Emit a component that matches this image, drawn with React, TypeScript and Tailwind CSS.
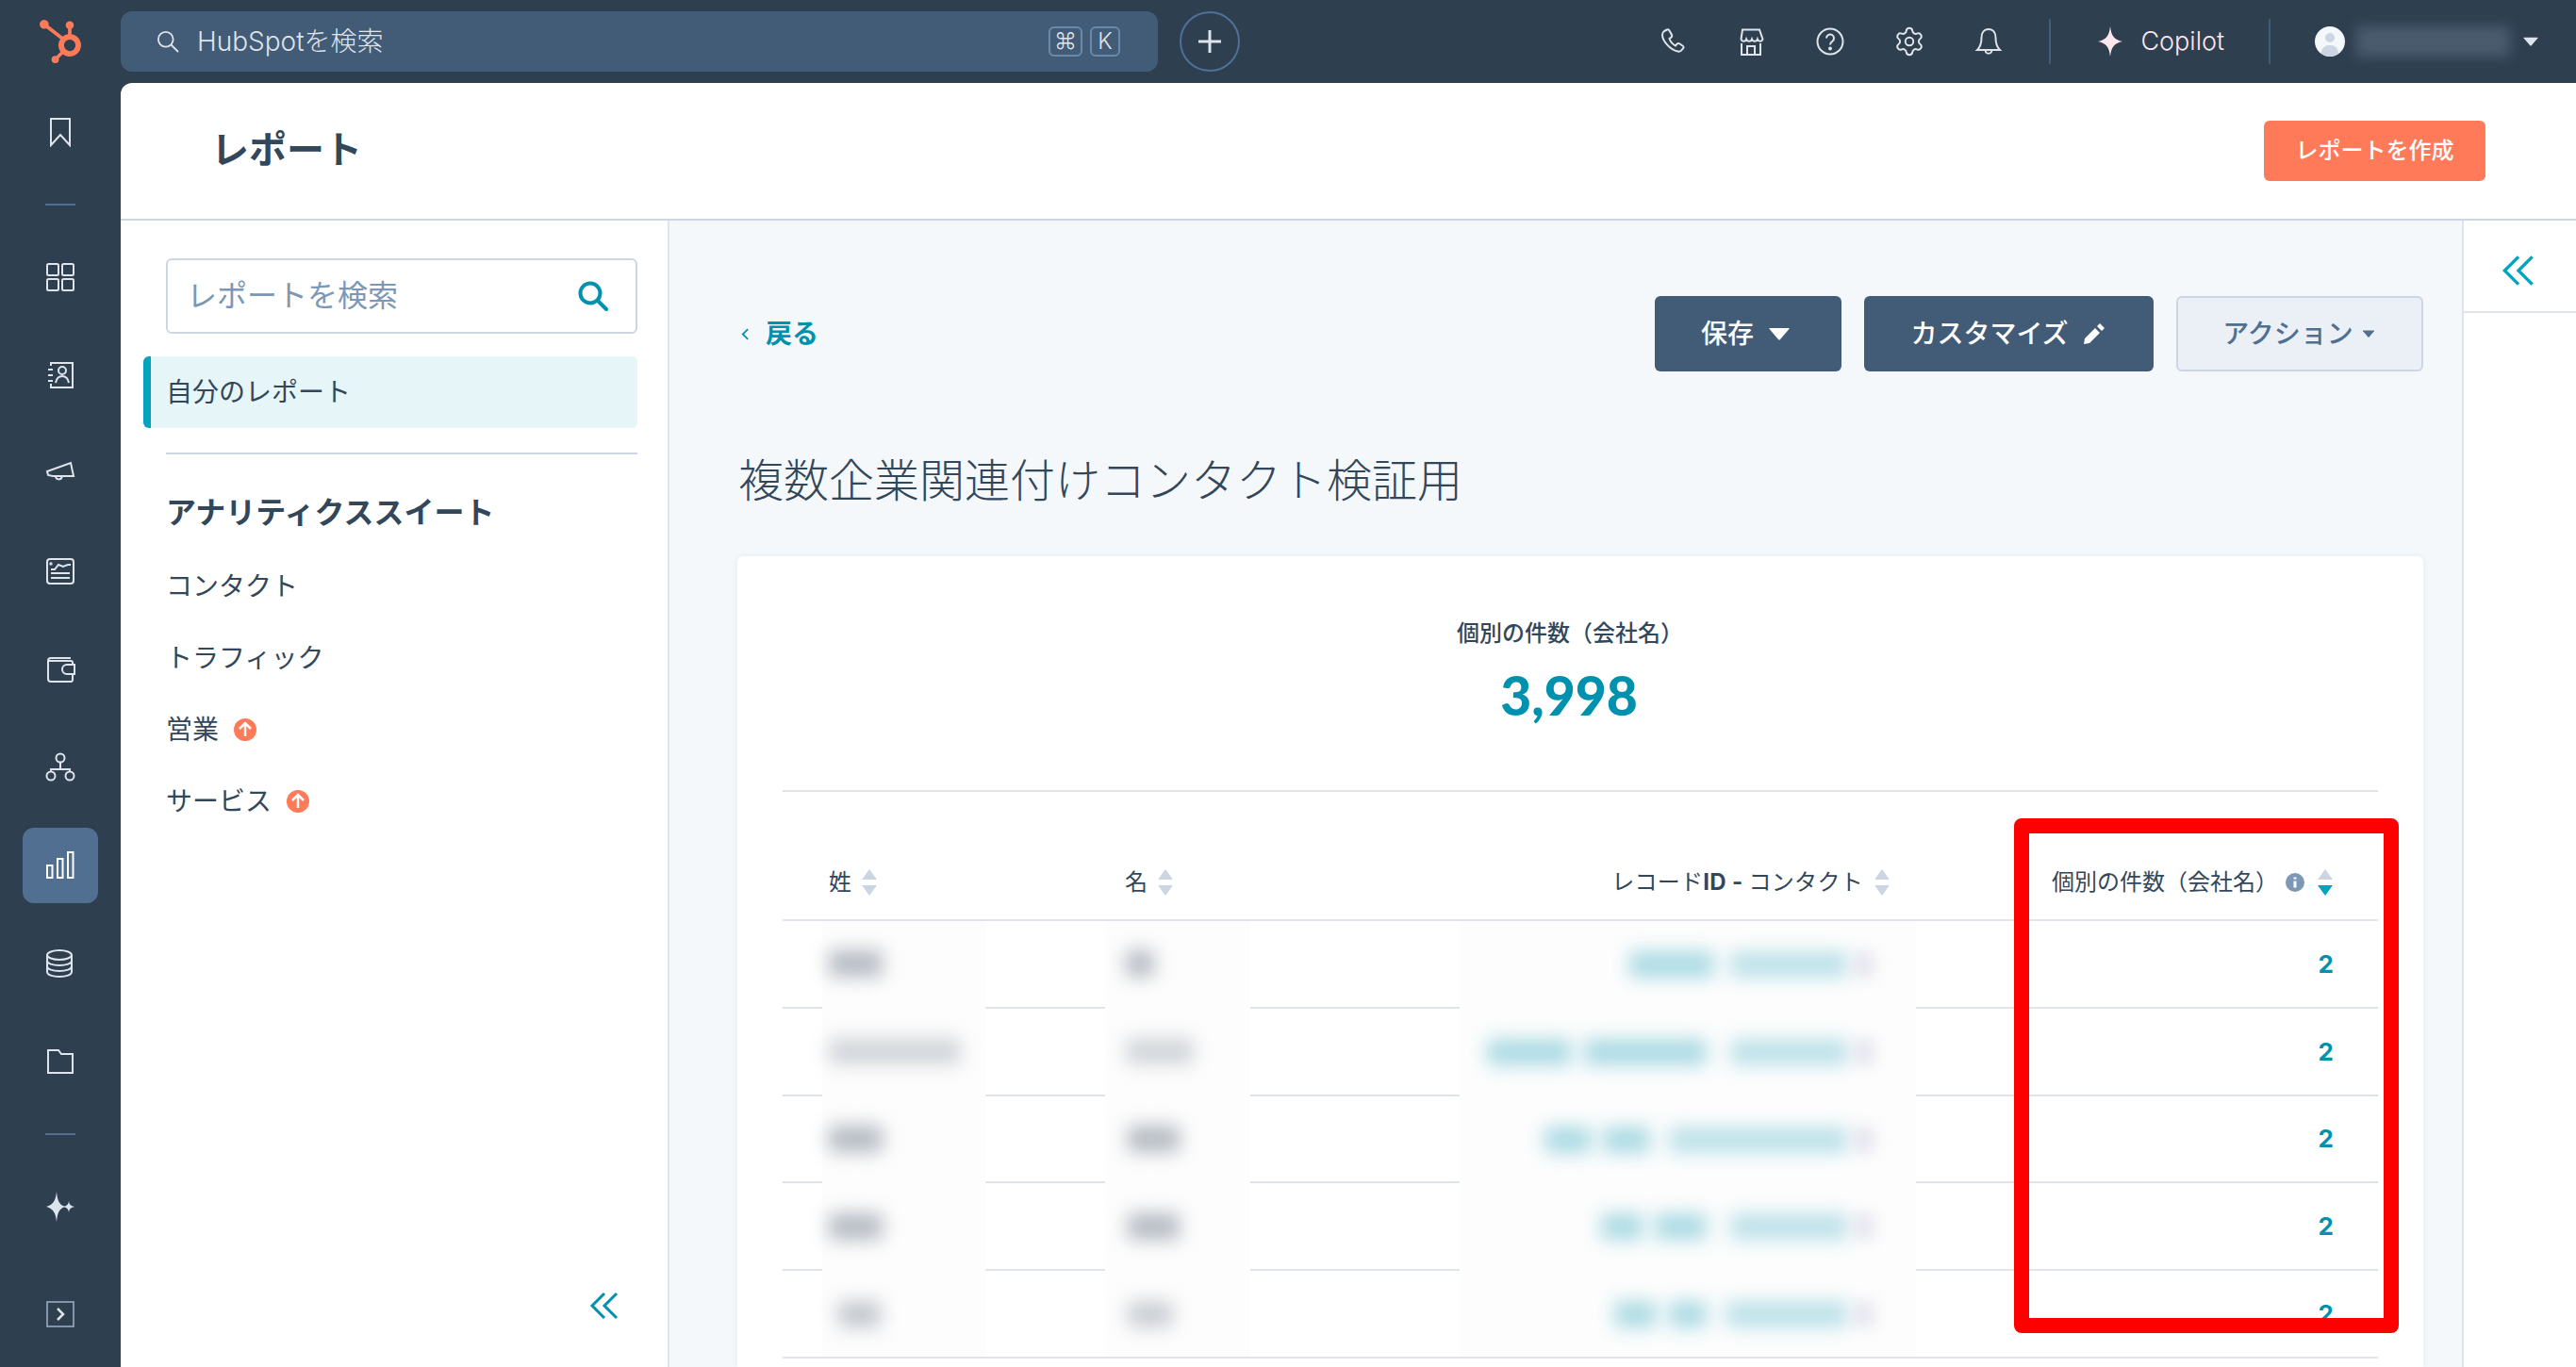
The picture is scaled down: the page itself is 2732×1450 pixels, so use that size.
import React from 'react';
import { SiHubspot } from 'react-icons/si';
import { Settings } from 'lucide-react';

type IP = { className?: string };
const S = ({ children, className = '', box = 32 }: { children: React.ReactNode; className?: string; box?: number }) => (
  <svg viewBox={`0 0 ${box} ${box}`} width={box} height={box} fill="none" stroke="currentColor" strokeWidth={2} className={className}>
    {children}
  </svg>
);

const Bookmark = () => <S><path d="M6 2h20v28l-10-11-10 11z" /></S>;
const Grid = () => <S><rect x="2" y="2" width="12" height="12" rx="1.5" /><rect x="18" y="2" width="12" height="12" rx="1.5" /><rect x="2" y="18" width="12" height="12" rx="1.5" /><rect x="18" y="18" width="12" height="12" rx="1.5" /></S>;
const Contacts = () => <S><path d="M6 6V3h23v26H6v-4" /><path d="M3 10h5M3 16h5M3 22h5" /><circle cx="18" cy="11" r="4" /><path d="M11 24c1-5 4-7 7-7s6 2 7 7" /></S>;
const Megaphone = () => <S><path d="M2 14l25-9 3 14H8l-5-1z" /><path d="M11 19c0 4 6 5 7 0" /></S>;
const Report = () => <S><rect x="2" y="3" width="28" height="26" rx="3" /><path d="M6 14h4l4-5 5 2 5-2h3" /><path d="M6 18h20M6 23h20" /><circle cx="6" cy="8" r="0.7" /></S>;
const Wallet = () => <S><path d="M27 4H6a3 3 0 0 0-3 3v19a3 3 0 0 0 3 3h21a2 2 0 0 0 2-2v-5" /><path d="M29 11v-2a2 2 0 0 0-2-2H3" /><path d="M31 11H23a5 5 0 0 0 0 10h8z" /></S>;
const Network = () => <S><circle cx="16" cy="6" r="4.5" /><circle cx="6" cy="25" r="4.5" /><circle cx="26" cy="25" r="4.5" /><path d="M16 11v7M6 20v-2h20v2" /></S>;
const Chart = () => <S><rect x="2" y="16" width="5.5" height="13" /><rect x="13" y="9" width="5.5" height="20" /><rect x="24" y="2" width="5.5" height="27" /></S>;
const Database = () => <S><ellipse cx="15" cy="7" rx="13" ry="5" /><path d="M2 7v18c0 3 6 5 13 5s13-2 13-5V7" /><path d="M2 13c0 3 6 5 13 5s13-2 13-5M2 19c0 3 6 5 13 5s13-2 13-5" /></S>;
const Folder = () => <S><path d="M3 4h11l3 4h12v20H3z" /></S>;
const Spark = () => (
  <svg viewBox="0 0 32 32" width="32" height="32" fill="currentColor">
    <path d="M12 0c1 10 3 14 9 16-6 2-8 6-9 16-1-10-4-14-11-16 7-2 10-6 11-16z" />
    <path d="M25 10c.5 3.500 1.800 5 6 6-4.200 1-5.500 2.500-6 6-.5-3.500-1.800-5-6-6 4.200-1 5.500-2.500 6-6z" />
  </svg>
);
const Expand = () => <S><rect x="2" y="3" width="28" height="26" strokeWidth={1.600} className="text-[#99acc2]" /><path d="M13 10l6 6-6 6" stroke="#dfe3eb" strokeWidth={2.500} /></S>;

const Phone = () => <S><path d="M8 5l3-1.500c1-.5 2 0 2.500 1L16 9c.4 1 .2 2-.6 2.600L13.500 13c1 3 3.500 6 6.500 7.500l1.600-1.800c.7-.8 1.700-.9 2.600-.4l3.500 2.400c1 .7 1.100 1.800.3 2.700l-2 2.200c-1 1-2 1.300-3.500 1C14 25 6 15 6 9c0-1.600.8-3.200 2-4z" /></S>;
const Store = () => <S><path d="M7 3.500h18l3.500 10c-1 3-4.500 3-5.600 0-1 3-4.800 3-5.900 0-1 3-4.800 3-5.900 0-1 3-4.600 3-5.600 0z" /><path d="M6 18v12h20V18M12 30v-9h8v9" /></S>;
const Help = () => <S><circle cx="16" cy="16" r="13.500" /><path d="M12 12.500a4 4 0 1 1 6.300 3.300c-1.500 1-2.300 1.700-2.300 3.700" /><circle cx="16" cy="23.500" r="1" fill="currentColor" /></S>;
const Gear = () => <Settings size={34} strokeWidth={1.400} />;
const Bell = () => <S><path d="M16 3c-5 0-7.500 4-7.500 9 0 6-1 9.500-4.500 13h24c-3.500-3.500-4.500-7-4.500-13 0-5-2.500-9-7.500-9z" /><path d="M12.500 25c.5 5 6.500 5 7 0" /></S>;
const Caret = ({ className = '' }: IP) => (
  <svg viewBox="0 0 22 14" className={className} fill="currentColor"><path d="M1 1h20q1 0 .4 1L12 13q-1 1-2 0L.6 2Q0 1 1 1z" /></svg>
);
const Chevrons = ({ className = '', size = 32 }: IP & { size?: number }) => (
  <svg viewBox="0 0 32 32" width={size} height={size} fill="none" stroke="currentColor" strokeWidth={3} className={className}>
    <path d="M16 3L3 16l13 13M29 3L16 16l13 13" />
  </svg>
);
const SearchIco = ({ w = 3, className = '' }: IP & { w?: number }) => (
  <svg viewBox="0 0 32 32" width="32" height="32" fill="none" stroke="currentColor" strokeWidth={w} strokeLinecap="round" className={className}>
    <circle cx="13" cy="13" r="10.500" /><path d="M21 21l9 9" />
  </svg>
);
const Sort = ({ active = false }: { active?: boolean }) => (
  <svg viewBox="0 0 16 28" width="16" height="28" className="shrink-0">
    <path d="M8 0l8 11H0z" fill="#cbd6e2" />
    <path d="M8 28l8-11H0z" fill={active ? '#00a4bd' : '#cbd6e2'} />
  </svg>
);
const UpBadge = () => (
  <svg viewBox="0 0 24 24" width="24" height="24" className="ml-4 shrink-0">
    <circle cx="12" cy="12" r="12" fill="#ff7a59" />
    <path d="M12 19V6M6 11l6-6 6 6" stroke="#fff" strokeWidth={2.500} fill="none" />
  </svg>
);

const railItems = [Grid, Contacts, Megaphone, Report, Wallet, Network, Chart, Database, Folder];
const RailItem = ({ I, active, h = 'h-[104px]' }: { I: React.FC; active?: boolean; h?: string }) => (
  <div className={`flex w-full shrink-0 items-center justify-center text-[#dfe3eb] ${h}`}>
    <div className={`flex items-center justify-center rounded-xl ${active ? 'h-[80px] w-[80px] bg-[#516f90] text-white' : ''}`}>
      <I />
    </div>
  </div>
);
const RailRule = () => (
  <div className="flex h-[50px] w-full shrink-0 items-center justify-center">
    <div className="h-[2px] w-[32px] bg-[#516f90]" />
  </div>
);

const rows = [
  { a: [57, 0], b: [30, 4], id: [[1728, 90], [1835, 125]], o: [1, 1] },
  { a: [140, 0], b: [72, 4], id: [[1577, 90], [1680, 130], [1835, 125]], o: [0.6, 0.6] },
  { a: [57, 0], b: [55, 6], id: [[1638, 50], [1700, 50], [1770, 190]], o: [1, 1] },
  { a: [57, 0], b: [55, 6], id: [[1698, 45], [1755, 55], [1835, 125]], o: [1, 1.3] },
  { a: [45, 10], b: [48, 6], id: [[1712, 45], [1770, 40], [1830, 130]], o: [0.8, 0.7] },
];
const GRID = 'grid grid-cols-[42px_173px_127px_154px_222px_484px_490px]';

export default function App() {
  return (
    <div className="flex h-[1450px] w-[2732px] overflow-hidden bg-[#2e3f50] font-[Inter,'Noto_Sans_CJK_JP',sans-serif] text-[#33475b]">
      {/* Rail */}
      <nav className="flex w-[128px] shrink-0 flex-col items-center">
        <div className="flex h-[88px] shrink-0 items-center justify-center text-[#ff7a59]"><SiHubspot size={46} /></div>
        <RailItem I={Bookmark} />
        <RailRule />
        {railItems.map((I, i) => <RailItem key={i} I={I} active={i === 6} />)}
        <RailRule />
        <RailItem I={Spark} />
        <RailItem I={Expand} h="h-[124px]" />
      </nav>

      <div className="flex min-w-0 flex-1 flex-col">
        {/* Top bar */}
        <header className="flex h-[88px] shrink-0 items-center justify-between pr-[40px]">
          <div className="flex items-center">
            <div className="flex h-[64px] w-[1100px] items-center rounded-xl bg-[#425b76] pl-[38px] pr-[40px] text-[#dfe3eb]">
              <SearchIco w={2.400} className="h-[24px] w-[24px]" />
              <span className="ml-[19px] text-[28px] font-light">HubSpotを検索</span>
              <div className="ml-auto flex items-center gap-[8px] font-light">
                <span className="flex h-[32px] w-[36px] items-center justify-center rounded-md border-2 border-[#6a8aab] text-[24px]">⌘</span>
                <span className="flex h-[32px] w-[32px] items-center justify-center rounded-md border-2 border-[#6a8aab] text-[24px]">K</span>
              </div>
            </div>
            <div className="ml-[23px] flex h-[64px] w-[64px] items-center justify-center rounded-full border-2 border-[#4f709a] text-[#dfe3eb]">
              <svg viewBox="0 0 24 24" width="24" height="24" stroke="currentColor" strokeWidth={3}><path d="M12 0v24M0 12h24" /></svg>
            </div>
          </div>
          <div className="flex items-center text-[#dfe3eb]">
            {[Phone, Store, Help, Gear, Bell].map((I, i) => (
              <div key={i} className="flex w-[84px] justify-center"><I /></div>
            ))}
            <div className="ml-[22px] h-[48px] w-[2px] bg-[#425b76]" />
            <div className="ml-[47px] text-[#ffe6ed]">
              <svg viewBox="0 0 32 32" width="32" height="32" fill="currentColor"><path d="M16 0c1.200 10 4 14 13 16-9 2-11.800 6-13 16-1.200-10-4-14-13-16 9-2 11.800-6 13-16z" /></svg>
            </div>
            <span className="ml-[16px] text-[27px] font-light text-[#ffe6ed]">Copilot</span>
            <div className="ml-[47px] h-[48px] w-[2px] bg-[#425b76]" />
            <div className="relative ml-[47px] h-[32px] w-[32px] overflow-hidden rounded-full bg-[#f5f8fa]">
              <div className="absolute left-[11px] top-[7px] h-[10px] w-[10px] rounded-full bg-[#cbd6e2]" />
              <div className="absolute left-[7px] top-[20px] h-[16px] w-[18px] rounded-full bg-[#cbd6e2]" />
            </div>
            <div className="ml-[12px] h-[32px] w-[163px] bg-[#4a5c6e] blur-[7px]" />
            <Caret className="ml-[14px] h-[10px] w-[16px] text-[#dfe3eb]" />
          </div>
        </header>

        {/* White workspace */}
        <div className="flex min-h-0 flex-1 flex-col overflow-hidden rounded-tl-xl bg-white">
          <div className="flex h-[146px] shrink-0 items-center justify-between border-b-2 border-[#cbd6e2] pl-[96px] pr-[96px]">
            <h1 className="pb-[2px] text-[40px] font-semibold">レポート</h1>
            <button className="flex h-[64px] w-[235px] items-center justify-center rounded-md bg-[#ff7a59] text-[24px] font-medium text-white">レポートを作成</button>
          </div>

          <div className="flex min-h-0 flex-1">
            {/* Left panel */}
            <aside className="flex w-[582px] shrink-0 flex-col border-r-2 border-[#dfe3eb] pb-[49px] pl-[48px] pr-[32px] pt-[40px]">
              <div className="flex h-[80px] items-center justify-between rounded-md border-2 border-[#cbd6e2] pl-[20px] pr-[29px]">
                <span className="text-[32px] text-[#7c98b6]">レポートを検索</span>
                <SearchIco w={4} className="text-[#0091ae]" />
              </div>
              <div className="-ml-[24px] mt-[24px] flex h-[76px] items-center rounded-md border-l-[8px] border-[#00a4bd] bg-[#e5f5f8] pl-[16px] text-[28px]">自分のレポート</div>
              <div className="mt-[26px] h-[2px] bg-[#cbd6e2]" />
              <div className="mt-[42px] text-[32px] font-bold leading-[40px]">アナリティクススイート</div>
              <div className="mt-[38px] flex h-[40px] items-center text-[28px]">コンタクト</div>
              <div className="mt-[36px] flex h-[40px] items-center text-[28px]">トラフィック</div>
              <div className="mt-[36px] flex h-[40px] items-center text-[28px]">営業<UpBadge /></div>
              <div className="mt-[36px] flex h-[40px] items-center text-[28px]">サービス<UpBadge /></div>
              <div className="mt-auto flex justify-end pr-[19px] text-[#0091ae]"><Chevrons /></div>
            </aside>

            {/* Main */}
            <main className="flex min-w-0 flex-1 flex-col bg-[#f5f8fa] pl-[72px] pr-[41px] pt-[80px]">
              <div className="flex h-[80px] items-center justify-between">
                <div className="ml-[4px] flex items-center text-[28px] font-semibold text-[#0091ae]">
                  <svg viewBox="0 0 10 14" width="9" height="13" fill="none" stroke="currentColor" strokeWidth={2}><path d="M8 1L2 7l6 6" /></svg>
                  <span className="ml-[17px]">戻る</span>
                </div>
                <div className="flex items-center gap-[24px] text-[28px] font-medium">
                  <button className="flex h-[80px] w-[198px] items-center justify-center rounded-md bg-[#425b76] pr-[6px] text-white">
                    保存<Caret className="ml-[16px] h-[14px] w-[22px]" />
                  </button>
                  <button className="flex h-[80px] w-[307px] items-center justify-center rounded-md bg-[#425b76] pr-[2px] text-white">
                    カスタマイズ
                    <svg viewBox="0 0 24 24" width="24" height="24" fill="currentColor" className="ml-[15px]"><path d="M18 1l5 5-3 3-5-5zM13 6l5 5L7 22l-6 1 1-6z" /></svg>
                  </button>
                  <button className="flex h-[80px] w-[262px] items-center justify-center rounded-md border-2 border-[#cbd6e2] bg-[#eaf0f6] pr-[2px] text-[#516f90]">
                    アクション<Caret className="ml-[9px] h-[8px] w-[14px]" />
                  </button>
                </div>
              </div>
              <h2 className="ml-[1px] mt-[84px] text-[48px] font-light leading-[64px]">複数企業関連付けコンタクト検証用</h2>

              <section className="mt-[48px] flex-1 rounded-t-md bg-white px-[48px] shadow-[0_0_6px_rgba(45,62,80,0.08)]">
                <div className="mt-[66px] pr-[22px] text-center text-[24px] font-medium leading-[32px]">個別の件数（会社名）</div>
                <div className="mt-[17px] pr-[24px] text-center font-[Lato,sans-serif] text-[57px] font-black leading-[64px] text-[#0091ae]">3,998</div>
                <div className="mt-[69px] h-[2px] bg-[#dfe3eb]" />

                <div className={`${GRID} h-[137px] items-end border-b-2 border-[#dfe3eb] pb-[21px] text-[24px]`}>
                  <div />
                  <div className="flex items-center gap-[11px] pl-[7px]"><span>姓</span><Sort /></div>
                  <div />
                  <div className="flex items-center gap-[11px] pl-[21px]"><span>名</span><Sort /></div>
                  <div />
                  <div className="flex items-center justify-end gap-[12px] pr-[28px]"><span className="tracking-[0.3px]">レコード<b>ID - </b>コンタクト</span><Sort /></div>
                  <div className="flex items-center pl-[144px]">
                    <span className="whitespace-nowrap">個別の件数（会社名）</span>
                    <svg viewBox="0 0 20 20" width="20" height="20" className="ml-[8px] shrink-0"><circle cx="10" cy="10" r="10" fill="#7c98b6" /><path d="M10 8.500v7M10 4.500v2" stroke="#fff" strokeWidth={3} /></svg>
                    <span className="ml-[14px]"><Sort active /></span>
                  </div>
                </div>

                {rows.map((r, i) => {
                  const last = i === rows.length - 1;
                  const patch = `bg-[#fdfdfd] ${last ? 'border-[#dfe3eb]' : 'border-transparent'}`;
                  return (
                    <div key={i} className={`${GRID} h-[92.8px]`}>
                      <div className="border-b-2 border-[#dfe3eb]" />
                      <div className={`flex items-center border-b-2 pl-[7px] ${patch}`}>
                        <div className="h-[28px] rounded bg-[#b4bac2] blur-[10px]" style={{ width: r.a[0], marginLeft: r.a[1], opacity: r.o[0] }} />
                      </div>
                      <div className="border-b-2 border-[#dfe3eb]" />
                      <div className={`flex items-center border-b-2 pl-[18px] ${patch}`}>
                        <div className="h-[28px] rounded bg-[#b4bac2] blur-[10px]" style={{ width: r.b[0], marginLeft: r.b[1], opacity: r.o[1] }} />
                      </div>
                      <div className="border-b-2 border-[#dfe3eb]" />
                      <div className={`relative flex items-center border-b-2 ${patch}`}>
                        {r.id.map(([x, w], k) => (
                          <div key={k} className="absolute top-[32px] h-[28px] rounded bg-[#a6d8e2] blur-[10px]" style={{ left: x - 1548, width: w, opacity: k === r.id.length - 1 ? 0.75 : 0.95 }} />
                        ))}
                        <div className="absolute left-[418px] top-[32px] h-[28px] w-[22px] bg-[#dcdcea] opacity-70 blur-[8px]" />
                      </div>
                      <div className="flex items-center justify-end border-b-2 border-[#dfe3eb] pr-[47px] text-[26px] font-bold text-[#0091ae]">2</div>
                    </div>
                  );
                })}
              </section>
            </main>

            <aside className="flex w-[121px] shrink-0 flex-col border-l-2 border-[#dfe3eb] bg-white">
              <div className="flex h-[98px] items-center justify-center border-b-2 border-[#dfe3eb] pt-[10px] pr-[4px] text-[#00a4bd]"><Chevrons size={36} /></div>
            </aside>
          </div>
        </div>
      </div>

      {/* Annotation */}
      <div className="absolute left-[2136px] top-[868px] h-[546px] w-[408px] rounded-lg border-[16px] border-[#ff0000]" />
    </div>
  );
}
